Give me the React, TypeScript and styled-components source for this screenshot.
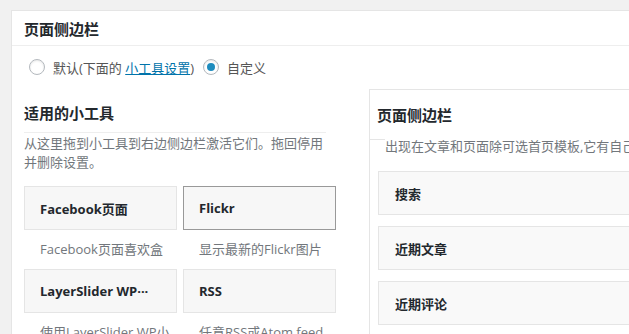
import React from "react";
import styled, { createGlobalStyle } from "styled-components";

const GlobalStyle = createGlobalStyle`
  html, body { margin: 0; padding: 0; }
  body {
    background: #f1f1f1;
    overflow: hidden;
    font-family: "Open Sans", "Noto Sans CJK SC", sans-serif;
    color: #444;
    font-size: 13px;
  }
`;

const Page = styled.div`
  padding: 10px 0 0 11px;
  width: 800px;
`;

const Panel = styled.div`
  background: #fff;
  border: 1px solid #e5e5e5;
  width: 760px;
  height: 400px;
`;

const PanelHeader = styled.h2`
  margin: 0;
  height: 32px;
  padding: 2px 12px 0;
  border-bottom: 1px solid #eee;
  font-size: 15px;
  line-height: 32px;
  font-weight: 700;
  color: #23282d;
`;

const RadioRow = styled.div`
  display: flex;
  align-items: center;
  padding: 13px 17px 0;
  height: 16px;
  font-size: 13px;
  color: #555;
`;

const RadioLabel = styled.label`
  display: flex;
  align-items: center;
  gap: 8px;
  margin-right: 9px;
  white-space: nowrap;
`;

const Radio = styled.span<{ $checked?: boolean }>`
  width: 14px;
  height: 14px;
  border-radius: 50%;
  border: 1px solid #b4b9be;
  background: #fff;
  box-shadow: inset 0 1px 2px rgba(0, 0, 0, 0.1);
  display: flex;
  align-items: center;
  justify-content: center;
  flex: none;
  &::after {
    content: "";
    display: ${(p) => (p.$checked ? "block" : "none")};
    width: 8px;
    height: 8px;
    border-radius: 50%;
    background: #1e8cbe;
  }
`;

const Link = styled.a`
  color: #0073aa;
  text-decoration: underline;
`;

const Columns = styled.div`
  display: flex;
  padding: 15px 0 0 12px;
  align-items: flex-start;
`;

const LeftColumn = styled.div`
  width: 302px;
  padding-top: 13px;
`;

const SectionTitle = styled.h3`
  margin: 0;
  font-size: 15px;
  line-height: 20px;
  font-weight: 700;
  color: #23282d;
  padding-bottom: 9px;
  border-bottom: 1px solid #eee;
`;

const SectionDesc = styled.p`
  margin: 0;
  padding-top: 1px;
  font-size: 13px;
  line-height: 19px;
  color: #72777c;
`;

const WidgetGrid = styled.div`
  display: grid;
  grid-template-columns: 153px 153px;
  column-gap: 6px;
  margin-top: 14px;
`;

const WidgetItem = styled.div``;

const WidgetCard = styled.div<{ $active?: boolean }>`
  height: 42px;
  border: 1px solid ${(p) => (p.$active ? "#999" : "#e5e5e5")};
  background: #f7f7f7;
  padding: 0 15px;
  display: flex;
  align-items: center;
  font-size: 13px;
  font-weight: 700;
  color: #23282d;
  white-space: nowrap;
  overflow: hidden;
`;

const WidgetDesc = styled.div`
  padding: 10px 16px 10px;
  font-size: 13px;
  line-height: 19px;
  color: #72777c;
  white-space: nowrap;
`;

const SidebarBox = styled.div`
  margin-left: 43px;
  margin-top: -1px;
  width: 400px;
  height: 260px;
  border: 1px solid #e5e5e5;
  background: #fff;
`;

const SidebarTitle = styled.h3`
  margin: 0;
  height: 49px;
  padding: 0 7px;
  border-bottom: 1px solid #e5e5e5;
  font-size: 15px;
  line-height: 50px;
  font-weight: 700;
  color: #23282d;
`;

const SidebarDesc = styled.p`
  position: relative;
  margin: -3px 0 0 15px;
  background: #fff;
  font-size: 13px;
  line-height: 19px;
  color: #72777c;
  white-space: nowrap;
`;

const SidebarList = styled.div`
  display: flex;
  flex-direction: column;
  gap: 11px;
  padding: 15px 0 0 8px;
`;

const SidebarCard = styled.div`
  height: 42px;
  border: 1px solid #e5e5e5;
  background: #f9f9f9;
  padding: 0 16px;
  display: flex;
  align-items: center;
  font-size: 13px;
  font-weight: 700;
  color: #23282d;
`;

const widgets = [
  { title: "Facebook页面", desc: "Facebook页面喜欢盒" },
  { title: "Flickr", desc: "显示最新的Flickr图片", active: true },
  { title: "LayerSlider WP···", desc: "使用LayerSlider WP小" },
  { title: "RSS", desc: "任意RSS或Atom feed" },
];

const sidebarWidgets = ["搜索", "近期文章", "近期评论"];

export default function App() {
  return (
    <>
      <GlobalStyle />
      <Page>
        <Panel>
          <PanelHeader>页面侧边栏</PanelHeader>
          <RadioRow>
            <RadioLabel>
              <Radio />
              <span>
                默认(下面的 <Link>小工具设置</Link>)
              </span>
            </RadioLabel>
            <RadioLabel>
              <Radio $checked />
              <span>自定义</span>
            </RadioLabel>
          </RadioRow>
          <Columns>
            <LeftColumn>
              <SectionTitle>适用的小工具</SectionTitle>
              <SectionDesc>
                从这里拖到小工具到右边侧边栏激活它们。拖回停用并删除设置。
              </SectionDesc>
              <WidgetGrid>
                {widgets.map((w) => (
                  <WidgetItem key={w.title}>
                    <WidgetCard $active={w.active}>{w.title}</WidgetCard>
                    <WidgetDesc>{w.desc}</WidgetDesc>
                  </WidgetItem>
                ))}
              </WidgetGrid>
            </LeftColumn>
            <SidebarBox>
              <SidebarTitle>页面侧边栏</SidebarTitle>
              <SidebarDesc>出现在文章和页面除可选首页模板,它有自己的小工具</SidebarDesc>
              <SidebarList>
                {sidebarWidgets.map((s) => (
                  <SidebarCard key={s}>{s}</SidebarCard>
                ))}
              </SidebarList>
            </SidebarBox>
          </Columns>
        </Panel>
      </Page>
    </>
  );
}
